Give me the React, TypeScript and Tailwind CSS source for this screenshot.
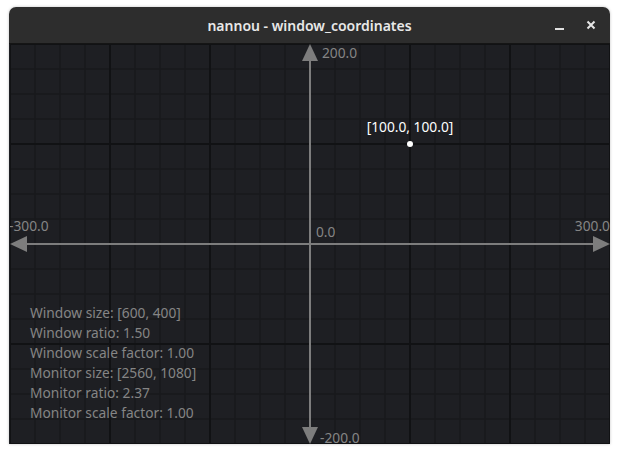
import React from "react";

const W = 600;
const H = 400;
const CX = W / 2;
const CY = H / 2;

const info = [
  "Window size: [600, 400]",
  "Window ratio: 1.50",
  "Window scale factor: 1.00",
  "Monitor size: [2560, 1080]",
  "Monitor ratio: 2.37",
  "Monitor scale factor: 1.00",
];

function Grid() {
  const minor: React.ReactNode[] = [];
  const major: React.ReactNode[] = [];
  for (let x = 0; x <= W; x += 25) {
    const isMajor = (x - CX) % 100 === 0;
    const line = (
      <line key={`v${x}`} x1={x} y1={0} x2={x} y2={H} strokeWidth={isMajor ? 2 : 1.5} />
    );
    (isMajor ? major : minor).push(line);
  }
  for (let y = 0; y <= H; y += 25) {
    const isMajor = (y - CY) % 100 === 0;
    const line = (
      <line key={`h${y}`} x1={0} y1={y} x2={W} y2={y} strokeWidth={isMajor ? 2 : 1.5} />
    );
    (isMajor ? major : minor).push(line);
  }
  return (
    <>
      <g stroke="#191a1d">{minor}</g>
      <g stroke="#111214">{major}</g>
    </>
  );
}

function Canvas() {
  const axis = "#7d7d7d";
  const label = "#858585";
  return (
    <svg width={W} height={H} viewBox={`0 0 ${W} ${H}`} className="block" style={{ fontFamily: '"Noto Sans", sans-serif' }}>
      <rect width={W} height={H} fill="#1e1f23" />
      <Grid />
      {/* axes */}
      <line x1={14} y1={CY} x2={W - 14} y2={CY} stroke={axis} strokeWidth={2} />
      <line x1={CX} y1={14} x2={CX} y2={H - 14} stroke={axis} strokeWidth={2} />
      <polygon points={`0,${CY} 17,${CY - 8} 17,${CY + 8}`} fill={axis} />
      <polygon points={`${W},${CY} ${W - 17},${CY - 8} ${W - 17},${CY + 8}`} fill={axis} />
      <polygon points={`${CX},0 ${CX - 8},17 ${CX + 8},17`} fill={axis} />
      <polygon points={`${CX},${H} ${CX - 8},${H - 17} ${CX + 8},${H - 17}`} fill={axis} />
      {/* axis labels */}
      <g fill={label} fontSize={13.75}>
        <text x={CX + 12} y={14}>200.0</text>
        <text x={CX + 10} y={H - 1.5}>-200.0</text>
        <text x={-1} y={CY - 13}>-300.0</text>
        <text x={W} y={CY - 13} textAnchor="end">300.0</text>
        <text x={CX + 6} y={CY - 7}>0.0</text>
      </g>
      {/* point */}
      <circle cx={CX + 100} cy={CY - 100} r={3} fill="#ffffff" />
      <text x={CX + 100} y={CY - 112} fill="#ffffff" fontSize={13.75} textAnchor="middle">
        [100.0, 100.0]
      </text>
    </svg>
  );
}

export default function App() {
  return (
    <div className="w-[620px] h-[455px] bg-white pt-[7px] pl-[9px]" style={{ fontFamily: '"Noto Sans", sans-serif' }}>
      <div className="relative w-[601px] rounded-t-[7px] overflow-hidden shadow-[0_0_3px_rgba(0,0,0,0.25)]">
        <div className="h-[37px] bg-[#2d2d2d] border-b border-[#151515] flex items-center justify-center relative">
          <span className="text-[14px] font-semibold text-[#e8e8e8]">nannou - window_coordinates</span>
          <div className="absolute right-[14px] top-0 h-full flex items-center gap-[22px]">
            <span className="block w-[9px] h-[2px] bg-[#e0e0e0] mt-[7px]" />
            <svg width="10" height="10" viewBox="0 0 10 10">
              <path d="M1.5 1.5 L8.5 8.5 M8.5 1.5 L1.5 8.5" stroke="#e6e6e6" strokeWidth="2" />
            </svg>
          </div>
        </div>
        <div className="relative pl-[1px] bg-[#1e1f23]">
          <Canvas />
          <div className="absolute left-[21px] top-[259px] flex flex-col text-[13.75px] leading-[20px] text-[#858585]">
            {info.map((line) => (
              <span key={line}>{line}</span>
            ))}
          </div>
        </div>
      </div>
    </div>
  );
}
